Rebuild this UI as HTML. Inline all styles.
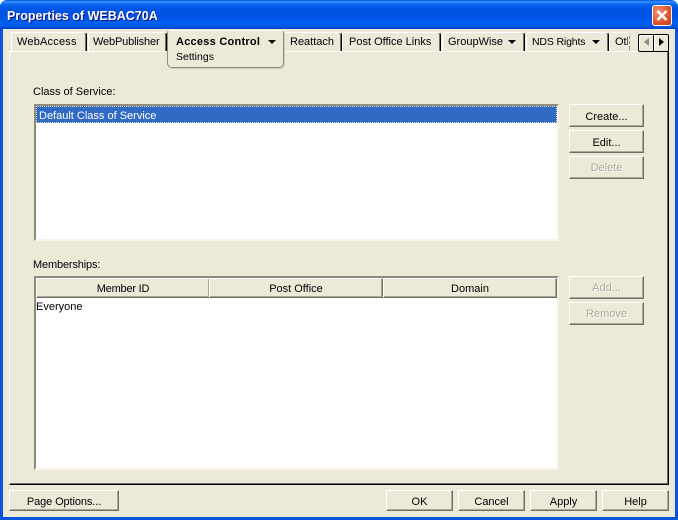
<!DOCTYPE html>
<html><head><meta charset="utf-8">
<style>
html,body{margin:0;padding:0;background:#fff;}
#w{position:relative;width:678px;height:520px;overflow:hidden;background:#fff;font:11px "Liberation Sans",sans-serif;color:#000;}
#w div,#w span{position:absolute;box-sizing:border-box;white-space:nowrap;}
.fr{left:0;top:0;width:678px;height:520px;background:#0855dd;border-radius:7px 7px 0 0;}
.tb{left:0;top:0;width:678px;height:29px;border-radius:7px 7px 0 0;background:linear-gradient(#0058e6 0,#3a93ff 2px,#0a6af0 4px,#0055e5 8px,#0054e3 16px,#0060f0 23px,#0058e8 26px,#0042c8 29px);}
.tt{left:7px;top:8px;font:bold 12.5px/17px "Liberation Sans",sans-serif;color:#fff;text-shadow:1px 1px 0 #0f1089;}
.cl{left:3px;top:29px;width:672px;height:488px;background:#ece9d8;}
.xb{left:652px;top:5px;width:20px;height:21px;border:1px solid #fff;border-radius:3px;background:radial-gradient(circle at 30% 30%,#ee9070,#e0542a 60%,#c23a12);}
.pn{left:9px;top:51px;width:660px;height:434px;background:#ece9d8;border-left:1px solid #fff;border-top:1px solid #fff;border-right:1px solid #000;border-bottom:1px solid #000;box-shadow:inset -1px -1px 0 #716f64;}
.tab{top:32px;height:19px;background:#ece9d8;border-top:1px solid #fff;border-left:1px solid #fff;border-right:1px solid #000;border-radius:3px 3px 0 0;box-shadow:inset -1px 0 0 #716f64;}
.ac{left:167px;top:30px;width:117px;height:38px;background:#ece9d8;border:1px solid #8f8c7e;border-top:1px solid #fff;border-radius:3px 3px 5px 5px;box-shadow:1px 1px 0 #cfccbc;}
.ar{width:0;height:0;border-left:4px solid transparent;border-right:4px solid transparent;border-top:4px solid #000;}
.lb{background:#fff;border-top:2px solid #8f8c7e;border-left:2px solid #8f8c7e;border-right:2px solid #f5f3ea;border-bottom:2px solid #f5f3ea;}
.btn{background:#ece9d8;border-top:1px solid #fff;border-left:1px solid #fff;border-right:1px solid #716f64;border-bottom:1px solid #716f64;text-align:center;box-shadow:inset -1px -1px 0 #aca899;}
.dis{color:#aca899;text-shadow:1px 1px 0 #fff;}
.hd{top:278px;height:20px;background:#ece9d8;border-top:1px solid #fff;border-left:1px solid #fff;border-right:1px solid #716f64;border-bottom:1px solid #716f64;text-align:center;line-height:20px;box-shadow:inset -1px -1px 0 #aca899;}
</style></head>
<body><div id="w">
<div class="fr"></div>
<div class="tb"></div>
<div class="tt">Properties of WEBAC70A</div>
<div class="xb"><svg width="18" height="19" viewBox="0 0 18 19" style="position:absolute;left:0;top:0"><path d="M4.5 5 13.5 14M13.5 5 4.5 14" stroke="#fff" stroke-width="2.6" fill="none"/></svg></div>
<div class="cl"></div>
<div class="pn"></div>

<div class="tab" style="left:11px;width:76px;"></div><span style="left:17px;top:36px;letter-spacing:.2px;">WebAccess</span>
<div class="tab" style="left:88px;width:79px;"></div><span style="left:93px;top:36px;letter-spacing:-.15px;">WebPublisher</span>
<div class="tab" style="left:284px;width:58px;"></div><span style="left:290px;top:36px;">Reattach</span>
<div class="tab" style="left:342px;width:99px;"></div><span style="left:349px;top:36px;">Post Office Links</span>
<div class="tab" style="left:442px;width:83px;"></div><span style="left:448px;top:36px;">GroupWise</span><div class="ar" style="left:508px;top:40px;"></div>
<div class="tab" style="left:526px;width:83px;"></div><span style="left:532px;top:36px;font-size:10.5px;letter-spacing:-.15px;">NDS Rights</span><div class="ar" style="left:592px;top:40px;"></div>
<div class="tab" style="left:609px;width:21px;border-right:1px dashed #888;box-shadow:none;"></div><span style="left:615px;top:36px;width:13px;overflow:hidden;">Oth</span>

<div class="ac"></div>
<span style="left:176px;top:36px;font-weight:bold;letter-spacing:.25px;">Access Control</span>
<div class="ar" style="left:268px;top:40px;"></div>
<span style="left:176px;top:51px;font-size:10.5px;">Settings</span>

<div style="left:638px;top:34px;width:16px;height:18px;background:#ece9d8;border:1px solid #000;border-radius:2px 0 0 2px;box-shadow:inset 1px 1px 0 #fff;"></div>
<div style="left:653px;top:34px;width:16px;height:18px;background:#ece9d8;border:1px solid #000;border-radius:0 2px 2px 0;box-shadow:inset 1px 1px 0 #fff;"></div>
<div style="left:644px;top:38px;width:0;height:0;border-top:4px solid transparent;border-bottom:4px solid transparent;border-right:5px solid #8f8c7e;"></div>
<div style="left:659px;top:38px;width:0;height:0;border-top:4px solid transparent;border-bottom:4px solid transparent;border-left:5px solid #000;"></div>

<span style="left:33px;top:86px;">Class of Service:</span>
<div class="lb" style="left:34px;top:104px;width:525px;height:137px;"></div>
<div style="left:36px;top:106px;width:521px;height:17px;background:#316ac5;border:1px dotted #e8e4c8;"></div>
<span style="left:39px;top:110px;color:#fff;">Default Class of Service</span>

<div class="btn" style="left:569px;top:104px;width:75px;height:23px;line-height:25px;">Create...</div>
<div class="btn" style="left:569px;top:130px;width:75px;height:23px;line-height:25px;">Edit...</div>
<div class="btn dis" style="left:569px;top:156px;width:75px;height:23px;line-height:23px;">Delete</div>

<span style="left:33px;top:259px;letter-spacing:-.15px;">Memberships:</span>
<div class="lb" style="left:34px;top:276px;width:525px;height:194px;"></div>
<div class="hd" style="left:36px;width:174px;letter-spacing:-.2px;">Member ID</div>
<div class="hd" style="left:209px;width:174px;">Post Office</div>
<div class="hd" style="left:383px;width:174px;">Domain</div>
<span style="left:36px;top:301px;">Everyone</span>

<div class="btn dis" style="left:569px;top:276px;width:75px;height:23px;line-height:23px;">Add...</div>
<div class="btn dis" style="left:569px;top:302px;width:75px;height:23px;line-height:23px;">Remove</div>

<div class="btn" style="left:9px;top:490px;width:110px;height:21px;line-height:23px;letter-spacing:-.1px;">Page Options...</div>
<div class="btn" style="left:386px;top:490px;width:67px;height:21px;line-height:23px;">OK</div>
<div class="btn" style="left:458px;top:490px;width:67px;height:21px;line-height:23px;">Cancel</div>
<div class="btn" style="left:530px;top:490px;width:67px;height:21px;line-height:23px;">Apply</div>
<div class="btn" style="left:602px;top:490px;width:67px;height:21px;line-height:23px;">Help</div>
</div></body></html>
